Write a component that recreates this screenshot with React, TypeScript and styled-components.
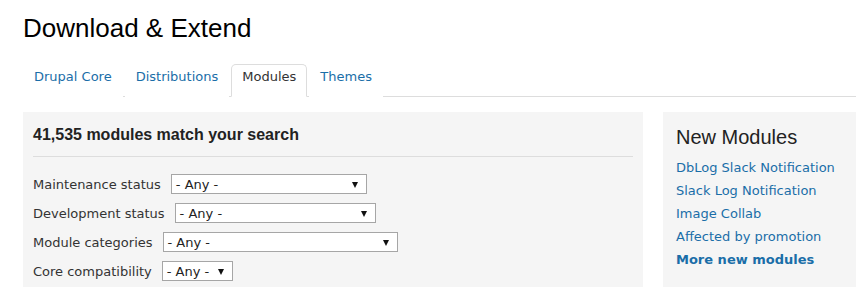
import React from "react";
import styled, { createGlobalStyle } from "styled-components";

const GlobalStyle = createGlobalStyle`
  html, body {
    margin: 0;
    padding: 0;
    background: #fff;
  }
  body {
    font-family: "DejaVu Sans", Verdana, sans-serif;
    color: #333;
  }
`;

const Page = styled.div`
  padding: 0 23px;
  width: 856px;
  box-sizing: border-box;
  overflow: hidden;
`;

const Title = styled.h1`
  margin: 0;
  padding-top: 13px;
  font-family: "Liberation Sans", Arial, sans-serif;
  font-weight: normal;
  font-size: 26px;
  line-height: 30px;
  color: #000;
`;

const Tabs = styled.ul`
  list-style: none;
  margin: 21px 0 0;
  padding: 0;
  display: flex;
  gap: 2px;
  border-bottom: 1px solid #ddd;
  width: 860px;
`;

const Tab = styled.li<{ $active?: boolean }>`
  margin-bottom: -1px;
  padding: 3px 10px 0;
  height: 33px;
  box-sizing: border-box;
  line-height: 18px;
  font-size: 13px;
  color: ${(p) => (p.$active ? "#333" : "#1a6ea8")};
  border: 1px solid ${(p) => (p.$active ? "#ddd" : "transparent")};
  border-bottom-color: ${(p) => (p.$active ? "#fff" : "transparent")};
  border-radius: 5px 5px 0 0;
  background: #fff;
  cursor: pointer;
`;

const Content = styled.div`
  display: flex;
  gap: 20px;
  margin-top: 15px;
`;

const Main = styled.section`
  width: 620px;
  flex: none;
  background: #f5f5f5;
  padding: 14px 10px 20px;
  box-sizing: border-box;
`;

const ResultHeading = styled.h2`
  margin: 0;
  font-family: "Liberation Sans", Arial, sans-serif;
  font-size: 16px;
  font-weight: bold;
  line-height: 18px;
  color: #222;
  padding-bottom: 12px;
  border-bottom: 1px solid #ddd;
`;

const Filters = styled.div`
  display: flex;
  flex-direction: column;
  gap: 9px;
  margin-top: 17px;
`;

const FilterRow = styled.label`
  display: flex;
  align-items: center;
  gap: 10px;
  font-size: 13px;
  color: #333;
`;

const SelectBox = styled.div<{ $width: number }>`
  width: ${(p) => p.$width}px;
  height: 20px;
  box-sizing: border-box;
  border: 1px solid #a6a6a6;
  background: #fff;
  display: flex;
  align-items: center;
  justify-content: space-between;
  padding: 0 8px 0 4px;
  font-size: 13px;
  color: #222;
`;

const Arrow = styled.span`
  width: 0;
  height: 0;
  border-left: 3.5px solid transparent;
  border-right: 3.5px solid transparent;
  border-top: 6px solid #111;
  margin-top: 1px;
`;

const Sidebar = styled.aside`
  width: 220px;
  flex: none;
  background: #f5f5f5;
  padding: 12px 13px 20px;
  box-sizing: border-box;
`;

const SideTitle = styled.h3`
  margin: 0 0 6px;
  font-family: "Liberation Sans", Arial, sans-serif;
  font-weight: normal;
  font-size: 20px;
  line-height: 26px;
  color: #222;
`;

const LinkList = styled.ul`
  list-style: none;
  margin: 0;
  padding: 0;
`;

const LinkItem = styled.li<{ $bold?: boolean }>`
  font-size: 13px;
  line-height: 23px;
  color: #1a6ea8;
  font-weight: ${(p) => (p.$bold ? "bold" : "normal")};
  white-space: nowrap;
`;

const filters = [
  { label: "Maintenance status", width: 196 },
  { label: "Development status", width: 201 },
  { label: "Module categories", width: 235 },
  { label: "Core compatibility", width: 71 },
];

const newModules = [
  "DbLog Slack Notification",
  "Slack Log Notification",
  "Image Collab",
  "Affected by promotion",
];

const App: React.FC = () => {
  return (
    <Page>
      <GlobalStyle />
      <Title>Download &amp; Extend</Title>
      <Tabs>
        <Tab>Drupal Core</Tab>
        <Tab>Distributions</Tab>
        <Tab $active>Modules</Tab>
        <Tab>Themes</Tab>
      </Tabs>
      <Content>
        <Main>
          <ResultHeading>41,535 modules match your search</ResultHeading>
          <Filters>
            {filters.map((f) => (
              <FilterRow key={f.label}>
                {f.label}
                <SelectBox $width={f.width}>
                  - Any -
                  <Arrow />
                </SelectBox>
              </FilterRow>
            ))}
          </Filters>
        </Main>
        <Sidebar>
          <SideTitle>New Modules</SideTitle>
          <LinkList>
            {newModules.map((m) => (
              <LinkItem key={m}>{m}</LinkItem>
            ))}
            <LinkItem $bold>More new modules</LinkItem>
          </LinkList>
        </Sidebar>
      </Content>
    </Page>
  );
};

export default App;
